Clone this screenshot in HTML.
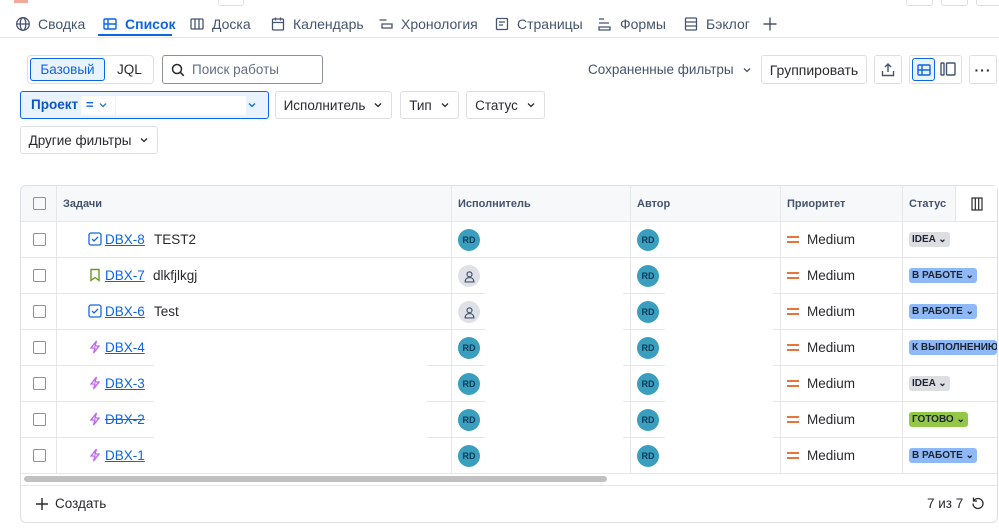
<!DOCTYPE html>
<html><head><meta charset="utf-8"><style>
*{box-sizing:border-box;margin:0;padding:0}
body{width:999px;height:528px;overflow:hidden;background:#fff;font-family:"Liberation Sans",Arial,sans-serif;color:#292a2e;font-size:14px;position:relative}
.a{position:absolute}
.tab{position:absolute;top:14px;height:20px;display:flex;align-items:center;gap:7px;font-size:14px;color:#44546f}
.tab svg{width:16px;height:16px}
.btn{position:absolute;border:1px solid #dcdfe4;border-radius:3px;background:#fff;display:flex;align-items:center;justify-content:center;font-size:14px;color:#292a2e;gap:8px}
.chev{width:10px;height:10px}
.row{position:absolute;left:21px;width:976px;height:36px;border-top:1px solid #e6e7ea}
.cb{position:absolute;left:12px;top:11px;width:13px;height:13px;border:1.5px solid #8c9097;border-radius:2px}
.key{position:absolute;left:84px;top:10px;color:#0c66e4;text-decoration:underline;font-size:13.5px}
.ic{position:absolute;left:67px;top:10px;width:14px;height:14px}
.sum{position:absolute;left:133px;top:10px;font-size:13.5px}
.av{position:absolute;width:22px;height:22px;border-radius:50%;background:#3a9fbf;color:#0b3a55;font-size:9px;font-weight:bold;display:flex;align-items:center;justify-content:center;top:7px}
.avg{background:#dfe1e6}
.pri{position:absolute;left:766px;top:10px;font-size:13.5px;display:flex;align-items:center;gap:8px}
.eq{width:12px;height:7px;border-top:2px solid #e5763b;border-bottom:2px solid #e5763b}
.st{position:absolute;left:888px;top:10px;height:15px;padding:0 3px;border-radius:3px;font-size:10px;font-weight:bold;display:flex;align-items:center;gap:2px;color:#1d2433;white-space:nowrap}
.vl{position:absolute;top:186px;width:1px;height:288px;background:#e6e7ea}
</style></head><body>
<div class="a" style="left:14px;top:0;width:14px;height:3px;background:#f3a89a"></div>
<div class="a" style="left:218px;top:-4px;width:26px;height:10px;border:1px solid #dcdfe4;border-radius:3px"></div>
<div class="a" style="left:906px;top:-4px;width:27px;height:10px;border:1px solid #dcdfe4;border-radius:3px"></div>
<div class="a" style="left:941px;top:-4px;width:27px;height:10px;border:1px solid #dcdfe4;border-radius:3px"></div>
<div class="a" style="left:976px;top:-4px;width:27px;height:10px;border:1px solid #dcdfe4;border-radius:3px"></div>

<div class="tab" style="left:15px"><svg viewBox="0 0 16 16" fill="none" stroke="#44546f" stroke-width="1.3"><circle cx="8" cy="8" r="6.3"/><ellipse cx="8" cy="8" rx="2.8" ry="6.3"/><path d="M1.7 8h12.6"/></svg>Сводка</div>
<div class="tab" style="left:102px;color:#0c66e4;font-weight:bold"><svg viewBox="0 0 16 16" fill="none" stroke="#0c66e4" stroke-width="1.4"><rect x="2" y="3" width="12" height="10" rx="1"/><path d="M2 8h12M6 3v10"/></svg>Список</div>
<div class="a" style="left:98px;top:34px;width:74px;height:2px;background:#0c66e4"></div>
<div class="tab" style="left:189px"><svg viewBox="0 0 16 16" fill="none" stroke="#44546f" stroke-width="1.3"><rect x="2" y="3" width="12" height="10" rx="1"/><path d="M6 3v10M10 3v10"/></svg>Доска</div>
<div class="tab" style="left:270px"><svg viewBox="0 0 16 16" fill="none" stroke="#44546f" stroke-width="1.3"><rect x="2.5" y="3" width="11" height="11" rx="1"/><path d="M2.5 6.5h11M5.5 1.5v3M10.5 1.5v3"/></svg>Календарь</div>
<div class="tab" style="left:378px"><svg viewBox="0 0 16 16" fill="none" stroke="#44546f" stroke-width="1.3"><path d="M1.5 4h7M4 8h10v4H4z"/></svg>Хронология</div>
<div class="tab" style="left:494px"><svg viewBox="0 0 16 16" fill="none" stroke="#44546f" stroke-width="1.3"><rect x="2.5" y="2.5" width="11" height="11" rx="1"/><path d="M5 6h6M5 9h4"/></svg>Страницы</div>
<div class="tab" style="left:597px"><svg viewBox="0 0 16 16" fill="none" stroke="#44546f" stroke-width="1.3"><path d="M2 3h5M2 7h10M2 11h11v3H2z"/></svg>Формы</div>
<div class="tab" style="left:683px"><svg viewBox="0 0 16 16" fill="none" stroke="#44546f" stroke-width="1.3"><rect x="2.5" y="2" width="11" height="12" rx="1"/><path d="M2.5 6h11M2.5 10h11"/></svg>Бэклог</div>
<div class="tab" style="left:762px"><svg viewBox="0 0 16 16" fill="none" stroke="#44546f" stroke-width="1.4"><path d="M8 1.5v13M1.5 8h13"/></svg></div>
<div class="a" style="left:0;top:37px;width:999px;height:1px;background:#e6e7ea"></div>

<div class="a" style="left:27px;top:55px;width:127px;height:29px;border:1px solid #dcdfe4;border-radius:4px"></div>
<div class="a" style="left:30px;top:58px;width:75px;height:23px;border:1px solid #0c66e4;background:#e9f2ff;border-radius:3px;color:#0c66e4;font-size:13.5px;display:flex;align-items:center;justify-content:center">Базовый</div>
<div class="a" style="left:117px;top:62px;font-size:13.5px">JQL</div>
<div class="a" style="left:162px;top:55px;width:161px;height:29px;border:1px solid #8c9097;border-radius:3px;display:flex;align-items:center;padding-left:8px;gap:7px;color:#626f86;font-size:13.5px"><svg width="14" height="14" viewBox="0 0 14 14" fill="none" stroke="#292a2e" stroke-width="1.5"><circle cx="6" cy="6" r="4.5"/><path d="M9.3 9.3l3.5 3.5"/></svg>Поиск работы</div>

<div class="a" style="left:588px;top:62px;font-size:13.5px;color:#44546f;display:flex;align-items:center;gap:8px">Сохраненные фильтры<svg class="chev" viewBox="0 0 10 10" fill="none" stroke="#44546f" stroke-width="1.3"><path d="M2 3.5l3 3 3-3"/></svg></div>
<div class="btn" style="left:761px;top:55px;width:106px;height:29px">Группировать</div>
<div class="btn" style="left:874px;top:55px;width:28px;height:29px"><svg width="16" height="16" viewBox="0 0 16 16" fill="none" stroke="#44546f" stroke-width="1.4"><path d="M8 10V2M5 5l3-3 3 3M2.5 9v4.5h11V9"/></svg></div>
<div class="btn" style="left:909px;top:55px;width:53px;height:29px"></div>
<div class="a" style="left:912px;top:58px;width:23px;height:23px;border:1px solid #0c66e4;background:#e9f2ff;border-radius:3px;display:flex;align-items:center;justify-content:center"><svg width="14" height="12" viewBox="0 0 14 12" fill="none" stroke="#0c66e4" stroke-width="1.4"><rect x="1" y="1" width="12" height="10" rx="1"/><path d="M1 6h12M5 1v10"/></svg></div>
<div class="a" style="left:940px;top:62px"><svg width="16" height="14" viewBox="0 0 16 14" fill="none" stroke="#44546f" stroke-width="1.4"><rect x="1" y="1" width="3" height="12" rx=".5"/><rect x="6.5" y="1" width="8.5" height="12" rx="1"/></svg></div>
<div class="btn" style="left:969px;top:55px;width:28px;height:29px;font-weight:bold;letter-spacing:1px">···</div>

<div class="a" style="left:20px;top:91px;width:249px;height:28px;border:1px solid #0c66e4;background:#e9f2ff;border-radius:3px"></div>
<div class="a" style="left:31px;top:97px;font-size:13.5px;font-weight:bold;color:#0c55c4">Проект</div>
<div class="a" style="left:81px;top:96px;width:34px;height:19px;background:#fff;border-radius:2px"></div>
<div class="a" style="left:86px;top:97px;color:#0c66e4;font-size:13px;font-weight:bold">=</div>
<svg class="a" style="left:98px;top:100px" width="10" height="10" viewBox="0 0 10 10" fill="none" stroke="#0c66e4" stroke-width="1.2"><path d="M2 3.5l3 3 3-3"/></svg>
<div class="a" style="left:116px;top:96px;width:130px;height:19px;background:#fff"></div>
<svg class="a" style="left:246px;top:100px" width="12" height="10" viewBox="0 0 10 10" fill="none" stroke="#0c66e4" stroke-width="1.3"><path d="M2 3.5l3 3 3-3"/></svg>
<div class="btn" style="left:275px;top:91px;width:117px;height:28px;font-size:13.5px">Исполнитель<svg class="chev" viewBox="0 0 10 10" fill="none" stroke="#292a2e" stroke-width="1.3"><path d="M2 3.5l3 3 3-3"/></svg></div>
<div class="btn" style="left:400px;top:91px;width:59px;height:28px;font-size:13.5px">Тип<svg class="chev" viewBox="0 0 10 10" fill="none" stroke="#292a2e" stroke-width="1.3"><path d="M2 3.5l3 3 3-3"/></svg></div>
<div class="btn" style="left:466px;top:91px;width:79px;height:28px;font-size:13.5px">Статус<svg class="chev" viewBox="0 0 10 10" fill="none" stroke="#292a2e" stroke-width="1.3"><path d="M2 3.5l3 3 3-3"/></svg></div>
<div class="btn" style="left:20px;top:126px;width:138px;height:28px;font-size:13.5px">Другие фильтры<svg class="chev" viewBox="0 0 10 10" fill="none" stroke="#292a2e" stroke-width="1.3"><path d="M2 3.5l3 3 3-3"/></svg></div>

<div class="a" style="left:20px;top:185px;width:978px;height:338px;border:1px solid #dcdfe4;border-radius:6px"></div>
<div class="a" style="left:21px;top:186px;width:976px;height:35px;background:#f7f8f9;border-radius:6px 6px 0 0"></div>
<div class="cb" style="left:33px;top:197px"></div>
<div class="a" style="left:63px;top:198px;font-size:11px;font-weight:bold;color:#44546f">Задачи</div>
<div class="a" style="left:458px;top:198px;font-size:11px;font-weight:bold;color:#44546f">Исполнитель</div>
<div class="a" style="left:637px;top:198px;font-size:11px;font-weight:bold;color:#44546f">Автор</div>
<div class="a" style="left:787px;top:198px;font-size:11px;font-weight:bold;color:#44546f">Приоритет</div>
<div class="a" style="left:909px;top:198px;font-size:11px;font-weight:bold;color:#44546f">Статус</div>
<div class="a" style="left:955px;top:186px;width:42px;height:35px;border-left:1px solid #e6e7ea;background:#fff;display:flex;align-items:center;justify-content:center"><svg width="12" height="14" viewBox="0 0 12 14" fill="none" stroke="#292a2e" stroke-width="1.2"><rect x="1" y="1" width="10" height="12"/><path d="M4.3 1v12M7.7 1v12"/></svg></div>
<div class="vl" style="left:56px"></div>
<div class="vl" style="left:451px"></div>
<div class="vl" style="left:630px"></div>
<div class="vl" style="left:780px"></div>
<div class="vl" style="left:902px;height:35px"></div>
<div class="vl" style="left:902px;top:221px;height:252px"></div>

<div class="row" style="top:221px"><div class="cb"></div><svg class="ic" viewBox="0 0 14 14" fill="none" stroke="#1868db" stroke-width="1.3"><rect x="1" y="1" width="12" height="12" rx="2"/><path d="M4 7l2 2 4-4"/></svg><span class="key">DBX-8</span><span class="sum">TEST2</span><div class="av" style="left:437px">RD</div><div class="av" style="left:616px">RD</div><div class="pri"><span class="eq"></span>Medium</div><div class="st" style="background:#dddee1">IDEA ⌄</div></div>
<div class="row" style="top:257px"><div class="cb"></div><svg class="ic" viewBox="0 0 14 14" fill="none" stroke="#6a9a23" stroke-width="1.4"><path d="M3 1.5h8v11L7 9.5l-4 3z"/></svg><span class="key">DBX-7</span><span class="sum" style="left:132px">dlkfjlkgj</span><div class="av avg" style="left:437px"><svg width="13" height="13" viewBox="0 0 12 12" fill="none" stroke="#44546f" stroke-width="1.1"><circle cx="6" cy="4" r="2.3"/><path d="M2 11c0-3 2-4 4-4s4 1 4 4z"/></svg></div><div class="av" style="left:616px">RD</div><div class="pri"><span class="eq"></span>Medium</div><div class="st" style="background:#8fb8f6">В РАБОТЕ ⌄</div></div>
<div class="row" style="top:293px"><div class="cb"></div><svg class="ic" viewBox="0 0 14 14" fill="none" stroke="#1868db" stroke-width="1.3"><rect x="1" y="1" width="12" height="12" rx="2"/><path d="M4 7l2 2 4-4"/></svg><span class="key">DBX-6</span><span class="sum">Test</span><div class="av avg" style="left:437px"><svg width="13" height="13" viewBox="0 0 12 12" fill="none" stroke="#44546f" stroke-width="1.1"><circle cx="6" cy="4" r="2.3"/><path d="M2 11c0-3 2-4 4-4s4 1 4 4z"/></svg></div><div class="av" style="left:616px">RD</div><div class="pri"><span class="eq"></span>Medium</div><div class="st" style="background:#8fb8f6">В РАБОТЕ ⌄</div></div>
<div class="row" style="top:329px"><div class="cb"></div><svg class="ic" viewBox="0 0 14 14" fill="none" stroke="#bf63f3" stroke-width="1.3"><path d="M8.5 1L3 8h4l-1.5 5L11 6H7z"/></svg><span class="key">DBX-4</span><div class="av" style="left:437px">RD</div><div class="av" style="left:616px">RD</div><div class="pri"><span class="eq"></span>Medium</div><div class="st" style="background:#8fb8f6;width:88px;overflow:hidden">К ВЫПОЛНЕНИЮ</div></div>
<div class="row" style="top:365px"><div class="cb"></div><svg class="ic" viewBox="0 0 14 14" fill="none" stroke="#bf63f3" stroke-width="1.3"><path d="M8.5 1L3 8h4l-1.5 5L11 6H7z"/></svg><span class="key">DBX-3</span><div class="av" style="left:437px">RD</div><div class="av" style="left:616px">RD</div><div class="pri"><span class="eq"></span>Medium</div><div class="st" style="background:#dddee1">IDEA ⌄</div></div>
<div class="row" style="top:401px"><div class="cb"></div><svg class="ic" viewBox="0 0 14 14" fill="none" stroke="#bf63f3" stroke-width="1.3"><path d="M8.5 1L3 8h4l-1.5 5L11 6H7z"/></svg><span class="key" style="text-decoration:line-through">DBX-2</span><div class="av" style="left:437px">RD</div><div class="av" style="left:616px">RD</div><div class="pri"><span class="eq"></span>Medium</div><div class="st" style="background:#94c748">ГОТОВО ⌄</div></div>
<div class="row" style="top:437px"><div class="cb"></div><svg class="ic" viewBox="0 0 14 14" fill="none" stroke="#bf63f3" stroke-width="1.3"><path d="M8.5 1L3 8h4l-1.5 5L11 6H7z"/></svg><span class="key">DBX-1</span><div class="av" style="left:437px">RD</div><div class="av" style="left:616px">RD</div><div class="pri"><span class="eq"></span>Medium</div><div class="st" style="background:#8fb8f6">В РАБОТЕ ⌄</div></div>

<div class="a" style="left:154px;top:330px;width:273px;height:143px;background:#fff"></div>
<div class="a" style="left:485px;top:258px;width:138px;height:215px;background:#fff"></div>
<div class="a" style="left:665px;top:258px;width:108px;height:215px;background:#fff"></div>

<div class="a" style="left:21px;top:473px;width:976px;height:1px;background:#e6e7ea"></div>
<div class="a" style="left:24px;top:476px;width:583px;height:6px;background:#c1c1c1;border-radius:3px"></div>
<div class="a" style="left:21px;top:485px;width:976px;height:1px;background:#e6e7ea"></div>
<div class="a" style="left:35px;top:496px;font-size:13.5px;display:flex;align-items:center;gap:6px"><svg width="14" height="14" viewBox="0 0 14 14" stroke="#292a2e" stroke-width="1.4"><path d="M7 1v12M1 7h12"/></svg>Создать</div>
<div class="a" style="left:927px;top:496px;font-size:13.5px">7 из 7</div>
<svg class="a" style="left:971px;top:496px" width="14" height="14" viewBox="0 0 14 14" fill="none" stroke="#292a2e" stroke-width="1.3"><path d="M3 4.5A5 5 0 1 1 2 7.5"/><path d="M2.5 1.5v3.5h3.5"/></svg>
</body></html>
